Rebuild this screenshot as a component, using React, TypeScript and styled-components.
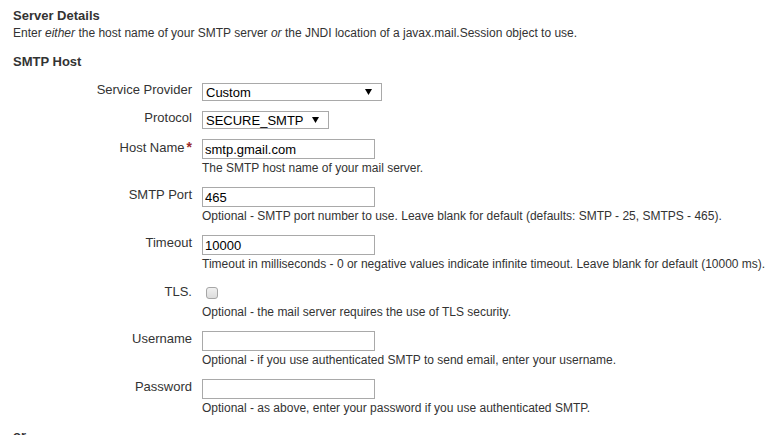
import React from 'react';
import styled, { createGlobalStyle } from 'styled-components';

const GlobalStyle = createGlobalStyle`
  html, body {
    margin: 0;
    padding: 0;
    background: #fff;
  }
  body {
    font-family: "Liberation Sans", Arial, sans-serif;
    color: #333;
  }
`;

const Page = styled.div`
  padding: 8px 13px;
`;

const SectionTitle = styled.h3`
  margin: 0;
  font-size: 13px;
  line-height: 16px;
  font-weight: bold;
`;

const Intro = styled.p`
  margin: 1px 0 0;
  font-size: 12px;
  line-height: 16px;
`;

const SubTitle = styled.h4`
  margin: 13px 0 0;
  font-size: 13px;
  line-height: 16px;
  font-weight: bold;
`;

const FormGrid = styled.div`
  margin-top: 13px;
  display: grid;
  grid-template-columns: 179px 1fr;
  column-gap: 10px;
  row-gap: 10px;
`;

const Label = styled.label<{ $lh?: number }>`
  text-align: right;
  font-size: 13px;
  line-height: ${(p) => p.$lh ?? 16}px;
  white-space: nowrap;
`;

const Required = styled.span`
  color: #9c2b2b;
  margin-left: 2px;
  font-size: 14px;
  font-weight: bold;
`;

const Field = styled.div`
  display: flex;
  flex-direction: column;
  align-items: flex-start;
`;

const SelectBox = styled.div<{ $width: number }>`
  box-sizing: border-box;
  width: ${(p) => p.$width}px;
  height: 18px;
  border: 1px solid #a9a9a9;
  display: flex;
  align-items: center;
  justify-content: space-between;
  padding: 0 9px 0 3px;
  font-size: 13px;
  color: #000;
  background: #fff;
`;

const TextInput = styled.input`
  box-sizing: border-box;
  width: 173px;
  height: 20px;
  margin: 0;
  border: 1px solid #a9a9a9;
  padding: 0 2px;
  font-family: "Liberation Sans", Arial, sans-serif;
  font-size: 13px;
  color: #000;
  outline: none;
`;

const CheckRow = styled.div`
  height: 20px;
  display: flex;
  align-items: center;
`;

const Check = styled.input`
  appearance: none;
  box-sizing: border-box;
  width: 12px;
  height: 12px;
  margin: 0 0 0 4px;
  border: 1px solid #a6a6a6;
  border-radius: 3px;
  background: linear-gradient(#f0f0f0, #dcdcdc);
`;

const Hint = styled.div`
  font-size: 12px;
  line-height: 18px;
  white-space: nowrap;
`;

const OrLine = styled.div`
  margin-top: 11px;
  font-size: 13px;
  line-height: 16px;
  font-weight: bold;
`;

const Arrow = () => (
  <svg width="7" height="6" viewBox="0 0 7 6">
    <polygon points="0,0 7,0 3.5,6" fill="#000" />
  </svg>
);

const Select = ({ value, width }: { value: string; width: number }) => (
  <SelectBox $width={width}>
    <span>{value}</span>
    <Arrow />
  </SelectBox>
);

const textFields = [
  { label: 'Host Name', required: true, value: 'smtp.gmail.com', hint: 'The SMTP host name of your mail server.' },
  {
    label: 'SMTP Port',
    value: '465',
    hint: 'Optional - SMTP port number to use. Leave blank for default (defaults: SMTP - 25, SMTPS - 465).',
  },
  {
    label: 'Timeout',
    value: '10000',
    hint: 'Timeout in milliseconds - 0 or negative values indicate infinite timeout. Leave blank for default (10000 ms).',
  },
];

const authFields = [
  { label: 'Username', value: '', hint: 'Optional - if you use authenticated SMTP to send email, enter your username.' },
  { label: 'Password', value: '', hint: 'Optional - as above, enter your password if you use authenticated SMTP.', password: true },
];

export default function App() {
  return (
    <>
      <GlobalStyle />
      <Page>
        <SectionTitle>Server Details</SectionTitle>
        <Intro>
          Enter <em>either</em> the host name of your SMTP server <em>or</em> the JNDI location of a
          javax.mail.Session object to use.
        </Intro>
        <SubTitle>SMTP Host</SubTitle>
        <FormGrid>
          <Label $lh={13}>Service Provider</Label>
          <Field>
            <Select value="Custom" width={180} />
          </Field>
          <Label $lh={14}>Protocol</Label>
          <Field>
            <Select value="SECURE_SMTP" width={127} />
          </Field>
          {textFields.map((f) => (
            <React.Fragment key={f.label}>
              <Label>
                {f.label}
                {f.required && <Required>*</Required>}
              </Label>
              <Field>
                <TextInput defaultValue={f.value} />
                <Hint>{f.hint}</Hint>
              </Field>
            </React.Fragment>
          ))}
          <Label $lh={18}>TLS.</Label>
          <Field>
            <CheckRow>
              <Check type="checkbox" />
            </CheckRow>
            <Hint>Optional - the mail server requires the use of TLS security.</Hint>
          </Field>
          {authFields.map((f) => (
            <React.Fragment key={f.label}>
              <Label>{f.label}</Label>
              <Field>
                <TextInput type={f.password ? 'password' : 'text'} defaultValue={f.value} />
                <Hint>{f.hint}</Hint>
              </Field>
            </React.Fragment>
          ))}
        </FormGrid>
        <OrLine>or</OrLine>
      </Page>
    </>
  );
}
